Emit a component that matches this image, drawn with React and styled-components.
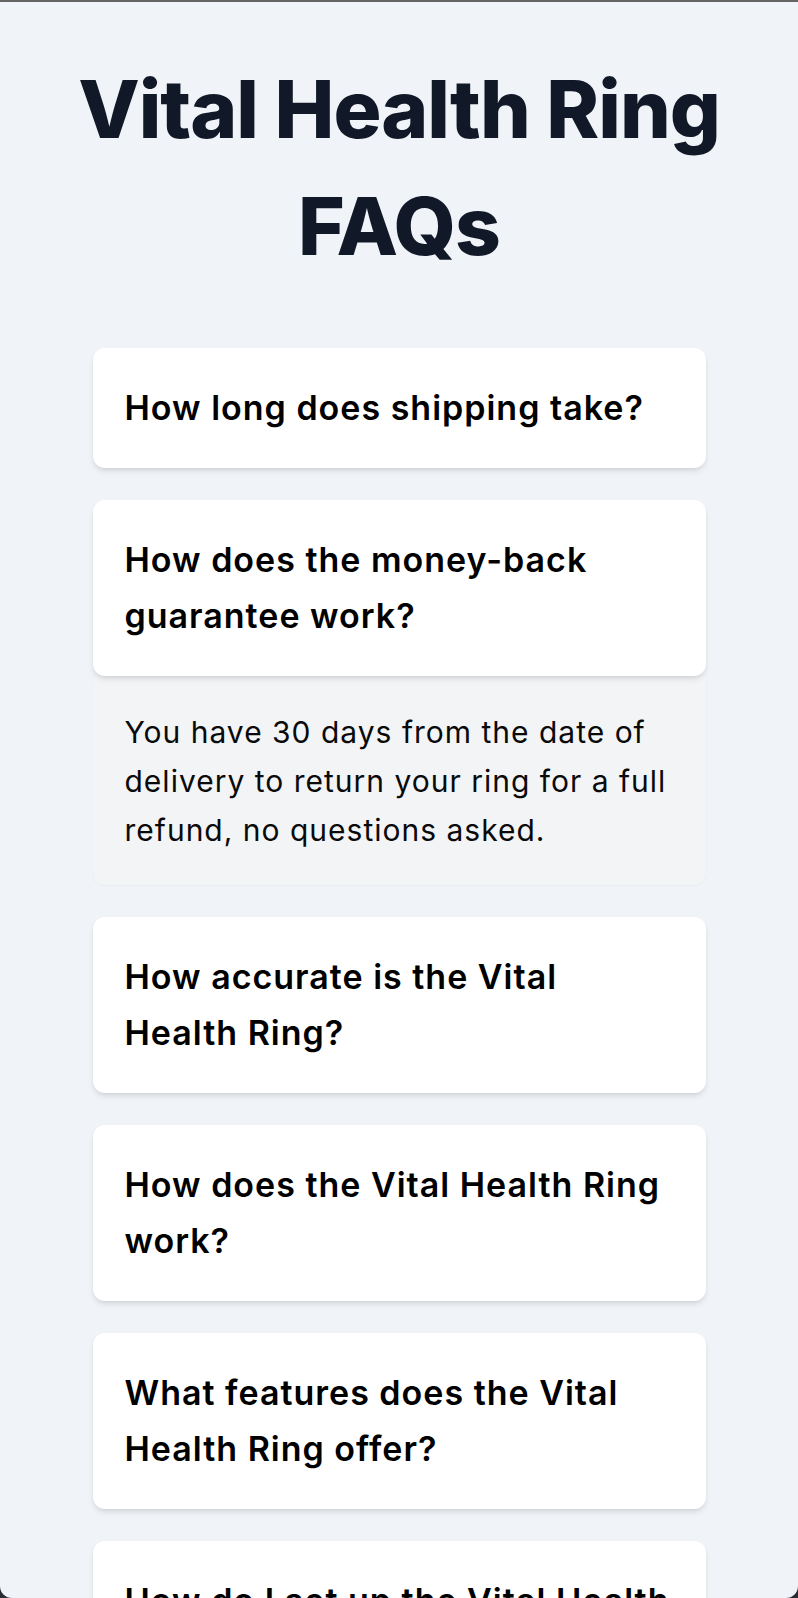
import React, { useState } from "react";
import styled, { createGlobalStyle } from "styled-components";

const GlobalStyle = createGlobalStyle`
  html, body {
    margin: 0;
    padding: 0;
    background: #2a2c33;
  }
  body {
    font-family: Inter, "Noto Sans", sans-serif;
  }
`;

const faqs = [
  {
    q: "How long does shipping take?",
    a: "Orders usually ship within 1-2 business days and arrive in 3-7 business days.",
  },
  {
    q: "How does the money-back guarantee work?",
    a: "You have 30 days from the date of delivery to return your ring for a full refund, no questions asked.",
  },
  {
    q: "How accurate is the Vital Health Ring?",
    a: "Our sensors are clinically validated against medical-grade devices.",
  },
  {
    q: "How does the Vital Health Ring work?",
    a: "Optical and temperature sensors track your body signals around the clock.",
  },
  {
    q: "What features does the Vital Health Ring offer?",
    a: "Sleep tracking, heart rate, HRV, temperature trends and activity insights.",
  },
  {
    q: "How do I set up the Vital Health Ring?",
    a: "Download the app, charge your ring and follow the pairing steps.",
  },
];

function App() {
  const [open, setOpen] = useState(1);

  return (
    <>
      <GlobalStyle />
      <Frame>
        <Title>Vital Health Ring FAQs</Title>
        <List>
          {faqs.map((item, i) => (
            <Item key={item.q}>
              <Question type="button" onClick={() => setOpen(open === i ? -1 : i)}>
                {item.q}
              </Question>
              {open === i && <Answer>{item.a}</Answer>}
            </Item>
          ))}
        </List>
      </Frame>
    </>
  );
}

const Frame = styled.main`
  box-sizing: border-box;
  height: 100vh;
  overflow: hidden;
  background: #f0f4f8;
  border-top: 2px solid #646464;
  border-radius: 0 0 12px 12px;
  padding-top: 48px;
`;

const Title = styled.h1`
  margin: 0 auto;
  max-width: 680px;
  text-align: center;
  font-size: 80px;
  line-height: 117px;
  font-weight: 800;
  letter-spacing: -1px;
  color: #111827;
`;

const List = styled.div`
  width: 613px;
  margin: 64px auto 0;
  display: flex;
  flex-direction: column;
  gap: 32px;
`;

const Item = styled.div`
  display: flex;
  flex-direction: column;
`;

const Question = styled.button`
  position: relative;
  z-index: 1;
  display: block;
  width: 100%;
  padding: 32px;
  border: none;
  border-radius: 12px;
  background: #ffffff;
  box-shadow: 0 4px 6px -1px rgba(0, 0, 0, 0.1), 0 2px 4px -2px rgba(0, 0, 0, 0.1);
  text-align: left;
  font-family: inherit;
  font-size: 34px;
  line-height: 56px;
  font-weight: 600;
  letter-spacing: 1px;
  color: #000000;
  cursor: pointer;
`;

const Answer = styled.div`
  margin-top: 1px;
  padding: 31px 32px 30px;
  border-radius: 0 0 12px 12px;
  background: #f3f4f6;
  box-shadow: 0 1px 2px rgba(0, 0, 0, 0.04);
  font-size: 30px;
  line-height: 49px;
  font-weight: 400;
  letter-spacing: 1px;
  color: #0a0a0a;
`;

export default App;
